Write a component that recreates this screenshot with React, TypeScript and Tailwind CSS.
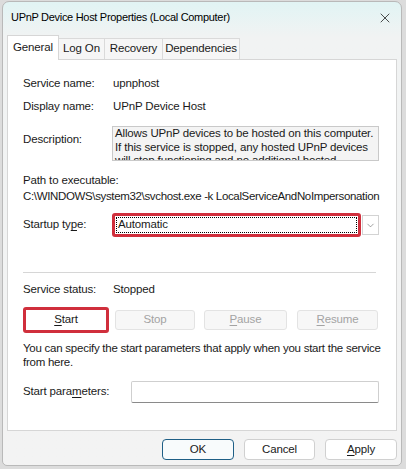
import { X, ChevronDown } from 'lucide-react';

// Label + value row used in the top section
const InfoRow = ({ label, value, className }: { label: string; value: string; className?: string }) => (
  <div className={`flex h-4 items-center ${className ?? ''}`}>
    <div className="w-[90px] shrink-0">{label}</div>
    <div>{value}</div>
  </div>
);

// Push buttons of the Service status row
const SvcButton = ({ first, rest, disabled, className }: { first: string; rest: string; disabled?: boolean; className?: string }) => (
  <div
    className={`flex h-[20px] items-center justify-center rounded-[3px] border ${
      disabled ? 'border-[#e3e3e3] bg-[#f7f7f7] text-[#a3a3a3]' : 'border-[#cfcfcf] bg-white text-black'
    } ${className ?? ''}`}
  >
    <span>
      <span className="underline underline-offset-2">{first}</span>
      {rest}
    </span>
  </div>
);

export default function App() {
  return (
    <div
      className="w-[406px] h-[469px] overflow-hidden bg-[#dcdcdc] pl-[2px] pr-[4px] pt-[1px] text-[11.5px] tracking-[-0.15px] text-[#1a1a1a]"
      style={{ fontFamily: '"Liberation Sans", Arial, sans-serif' }}
    >
      <div className="flex h-[465px] flex-col rounded-t-[7px] rounded-b-[5px] border border-[#b9b9b9] bg-gradient-to-b from-[#e1f4f4] via-[#f1f3f3] via-[35px] to-[#f3f3f3]">
        {/* Title bar */}
        <div className="flex h-[31px] shrink-0 items-center justify-between pl-[8px] pr-[8px]">
          <div className="text-[11px] tracking-[-0.3px] text-black">UPnP Device Host Properties (Local Computer)</div>
          <X size={16} strokeWidth={1.2} className="text-[#222]" />
        </div>

        {/* Tab strip */}
        <div className="flex h-[26px] shrink-0 items-end pl-[4px]">
          <div className="relative z-10 -mb-px flex h-[25px] w-[52px] items-center justify-center border border-b-0 border-[#d6d6d6] bg-white">
            General
          </div>
          <div className="flex h-[21px] w-[46px] items-center justify-center border border-l-0 border-b-0 border-[#dadada] bg-[#f6f6f6]">
            Log On
          </div>
          <div className="flex h-[21px] w-[58px] items-center justify-center border border-l-0 border-b-0 border-[#dadada] bg-[#f6f6f6]">
            Recovery
          </div>
          <div className="flex h-[21px] w-[77px] items-center justify-center border border-l-0 border-b-0 border-[#dadada] bg-[#f6f6f6]">
            Dependencies
          </div>
        </div>

        {/* Tab panel */}
        <div className="mx-[4px] flex h-[372px] shrink-0 flex-col border border-[#d6d6d6] bg-white pl-[15px] pr-[17px] pt-[16px]">
          <InfoRow label="Service name:" value="upnphost" />
          <InfoRow label="Display name:" value="UPnP Device Host" className="mt-[7px]" />

          <div className="mt-[11px] flex">
            <div className="w-[89px] shrink-0 pt-[5px] leading-4">Description:</div>
            <div className="h-[35px] flex-1 overflow-hidden whitespace-nowrap border border-[#c9c9c9] bg-[#f4f4f4] pl-[2px] leading-[13.5px]">
              Allows UPnP devices to be hosted on this computer.
              <br />
              If this service is stopped, any hosted UPnP devices
              <br />
              will stop functioning and no additional hosted
            </div>
          </div>

          <div className="mt-[11px] h-4 leading-4">Path to executable:</div>
          <div className="h-4 whitespace-nowrap leading-4 tracking-[-0.35px]">
            C:\WINDOWS\system32\svchost.exe -k LocalServiceAndNoImpersonation
          </div>

          <div className="mt-[9px] flex h-[24px] items-center">
            <div className="w-[89px] shrink-0">
              Startup ty<span className="underline underline-offset-2">p</span>e:
            </div>
            <div className="flex h-[24px] w-[250px] items-center rounded-[3px] border-[3px] border-[#d02f3c] bg-white p-[1px]">
              <div className="flex h-full flex-1 items-center border border-dotted border-black pl-[1px] leading-none">
                Automatic
              </div>
            </div>
            <div className="ml-[1px] flex h-[20px] w-[17px] items-center justify-center border border-[#d3d3d3] bg-white">
              <ChevronDown size={11} strokeWidth={1.2} className="text-[#555]" />
            </div>
          </div>

          <div className="mt-[35px] h-px w-[353px] bg-[#d6d6d6]" />

          <InfoRow label="Service status:" value="Stopped" className="mt-[9px]" />

          <div className="mt-[9px] flex h-[26px] items-center">
            <div className="flex h-[26px] w-[86px] items-center justify-center rounded-[3px] border-[3px] border-[#d02f3c] bg-white">
              <span>
                <span className="underline underline-offset-2">S</span>tart
              </span>
            </div>
            <SvcButton first="" rest="Stop" disabled className="ml-[6px] w-[80px]" />
            <SvcButton first="P" rest="ause" disabled className="ml-[9px] w-[83px]" />
            <SvcButton first="R" rest="esume" disabled className="ml-[10px] w-[81px]" />
          </div>

          <div className="mt-[9px] whitespace-nowrap leading-[13.5px] tracking-[-0.25px]">
            You can specify the start parameters that apply when you start the service
            <br />
            from here.
          </div>

          <div className="mt-[12px] flex h-[22px] items-center">
            <div className="w-[108px] shrink-0">
              Start para<span className="underline underline-offset-2">m</span>eters:
            </div>
            <div className="h-[22px] w-[248px] rounded-[2px] border border-[#cfcfcf] border-b-[#8a8a8a] bg-white" />
          </div>
        </div>

        {/* Dialog buttons */}
        <div className="flex flex-1 items-start justify-end gap-[10px] pr-[4px] pt-[8px]">
          <div className="flex h-[21px] w-[72px] items-center justify-center rounded-[4px] border border-[#1f5f86] bg-[#f8fbfc]">
            OK
          </div>
          <div className="flex h-[21px] w-[71px] items-center justify-center rounded-[4px] border border-[#d0d0d0] bg-white">
            Cancel
          </div>
          <div className="flex h-[21px] w-[72px] items-center justify-center rounded-[4px] border border-[#d0d0d0] bg-white">
            <span>
              <span className="underline underline-offset-2">A</span>pply
            </span>
          </div>
        </div>
      </div>
    </div>
  );
}
